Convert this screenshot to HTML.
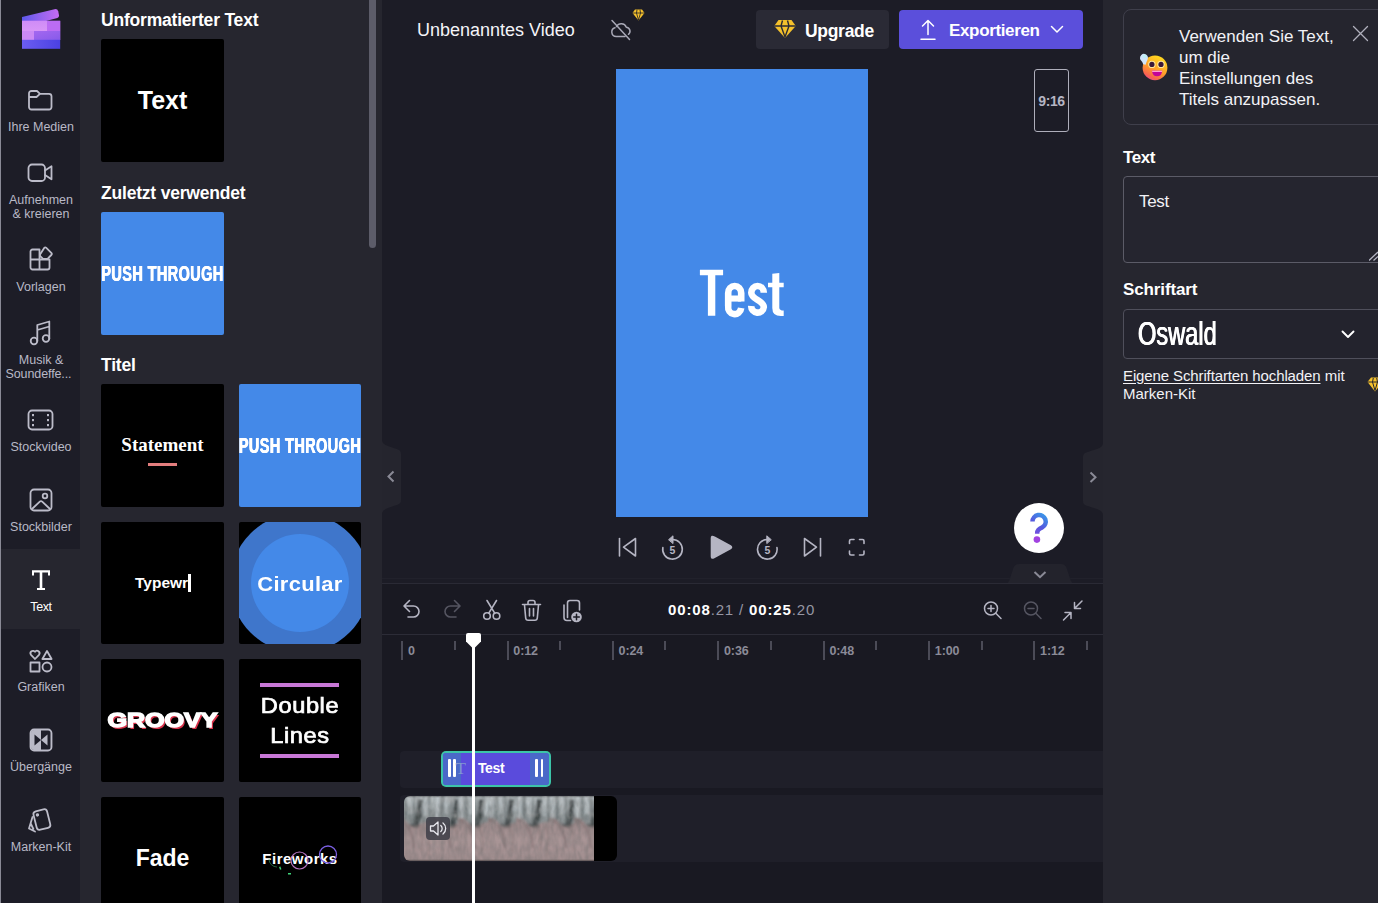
<!DOCTYPE html>
<html><head><meta charset="utf-8">
<style>
*{box-sizing:border-box;margin:0;padding:0}
html,body{width:1378px;height:903px;overflow:hidden;background:#1c1c26;font-family:"Liberation Sans",sans-serif;color:#fff}
.abs{position:absolute}
#side{position:absolute;left:0;top:0;width:80px;height:903px;background:#1d1d27}
#side .edge{position:absolute;left:0;top:0;width:1px;height:903px;background:#8a8a96}
.nav{position:absolute;left:0;width:80px;text-align:center;color:#b9b9c6;font-size:12.5px;line-height:14px}
.nav svg{position:absolute;left:26px;width:28px;height:28px;fill:none;stroke:#bcbcc9;stroke-width:1.8;stroke-linecap:round;stroke-linejoin:round}
.nav .lb{position:absolute;left:1px;margin-top:1px;width:80px;text-align:center;white-space:nowrap}
#panel{position:absolute;left:80px;top:0;width:302px;height:903px;background:#26262f}
.h{position:absolute;left:101px;font-weight:bold;font-size:17.5px;color:#fff;white-space:nowrap;letter-spacing:-0.2px}
.th{position:absolute;width:123px;height:123px;background:#000;overflow:hidden}
.th.bl{background:#4489e8}
.ctr{position:absolute;left:0;width:100%;text-align:center;color:#fff;white-space:nowrap}
#center{position:absolute;left:382px;top:0;width:721px;height:583px;background:#1c1c26}
#tl{position:absolute;left:382px;top:583px;width:721px;height:320px;background:#191922;border-top:1px solid #2a2a35}
#right{position:absolute;left:1103px;top:0;width:275px;height:903px;background:#26262f}
.push{text-shadow:.5px 0 #fff,-.5px 0 #fff;font-weight:bold;font-size:22px;line-height:26px;letter-spacing:.7px;transform:scaleX(.655);left:-60px;width:calc(100% + 120px)}
.th{border-radius:2px}
.rl{font-size:12.5px;line-height:16px;color:#8b8b98;font-weight:bold;white-space:nowrap;letter-spacing:-.1px}
</style></head><body>
<div id="side"><div class="edge"></div>
<svg class="abs" style="left:20px;top:7px" width="44" height="46" viewBox="0 0 44 46">
<defs><linearGradient id="lg1" x1="0" y1="0" x2="1" y2="0"><stop offset="0" stop-color="#5c58ea"/><stop offset=".45" stop-color="#8f62ee"/><stop offset="1" stop-color="#c56cf3"/></linearGradient>
<linearGradient id="lg3" x1="0" y1="0" x2="1" y2="0"><stop offset="0" stop-color="#6b5df0"/><stop offset=".5" stop-color="#5b4fe9"/><stop offset="1" stop-color="#4b41e2"/></linearGradient>
<linearGradient id="lg4" x1="0" y1="0" x2="1" y2="1"><stop offset="0" stop-color="#a468f0"/><stop offset="1" stop-color="#875aea"/></linearGradient>
<linearGradient id="lg5" x1="0" y1="0" x2="0" y2="1"><stop offset="0" stop-color="#cf8cf6"/><stop offset="1" stop-color="#d896f7"/></linearGradient></defs>
<path d="M2 10 L34.500 2.200 Q37.500 1.600 38.300 4.500 L39 8.500 Q39.200 10.300 37.300 11 L26 14 L2 14 Z" fill="url(#lg1)"/>
<rect x="2" y="13.800" width="38.200" height="19.200" fill="#b66af1"/>
<rect x="2" y="13.800" width="25" height="10.200" fill="url(#lg5)"/>
<rect x="27" y="13.800" width="13.200" height="10.200" fill="#bb6cf3"/>
<rect x="2" y="24" width="12" height="9" fill="#cc8af5"/>
<rect x="14" y="24" width="26.200" height="9" fill="url(#lg4)"/>
<rect x="2" y="32.800" width="38.200" height="9" fill="url(#lg3)"/>
</svg>

<div class="nav" style="top:86px"><svg viewBox="0 0 28 28" style="top:0"><path d="M3 7.5 a2.5 2.5 0 0 1 2.500 -2.500 h5.500 l3 2.800 h9 a2.500 2.500 0 0 1 2.500 2.500 v10.700 a2.500 2.500 0 0 1 -2.500 2.500 h-17.500 a2.500 2.500 0 0 1 -2.500 -2.500 z M3 11 h7.500 l3.500 -3.200"/></svg><div class="lb" style="top:33px">Ihre Medien</div></div>

<div class="nav" style="top:159px"><svg viewBox="0 0 28 28" style="top:0"><rect x="2.500" y="5.500" width="16.500" height="16.500" rx="3.500"/><path d="M19 11.500 l6.500 -4.200 v13 l-6.500 -4.200"/></svg><div class="lb" style="top:33px">Aufnehmen</div><div class="lb" style="top:47px">&amp; kreieren</div></div>

<div class="nav" style="top:245px"><svg viewBox="0 0 28 28" style="top:0"><path d="M4.500 6.500 a2 2 0 0 1 2 -2 h7 v10 h-9 z M4.500 14.500 h9 v10 h-7 a2 2 0 0 1 -2 -2 z M13.500 14.500 h10 v8 a2 2 0 0 1 -2 2 h-8 z"/><path d="M20.300 2.900 l5 5 a1.500 1.500 0 0 1 0 2.100 l-3.800 3.800 h-4.500 l-3 -3 v-1.200 l4.200 -6.700 a1.500 1.500 0 0 1 2.100 0 z" transform="translate(0 0)"/></svg><div class="lb" style="top:34px">Vorlagen</div></div>

<div class="nav" style="top:318px"><svg viewBox="0 0 28 28" style="top:0"><circle cx="8" cy="23" r="3.300"/><circle cx="20" cy="20.500" r="3.300"/><path d="M11.300 23 v-16 l12 -3.500 v17 M11.300 12 l12 -3.500"/></svg><div class="lb" style="top:34px">Musik &amp;</div><div class="lb" style="top:48px;left:-1.500px;letter-spacing:-.1px">Soundeffe...</div></div>

<div class="nav" style="top:406px"><svg viewBox="0 0 28 28" style="top:0"><rect x="2.500" y="4.500" width="24" height="19" rx="3.500"/><g stroke="none" fill="#b9b9c6"><rect x="6" y="8" width="2" height="2.200"/><rect x="6" y="13" width="2" height="2.200"/><rect x="6" y="18" width="2" height="2.200"/><rect x="21" y="8" width="2" height="2.200"/><rect x="21" y="13" width="2" height="2.200"/><rect x="21" y="18" width="2" height="2.200"/></g></svg><div class="lb" style="top:33px">Stockvideo</div></div>

<div class="nav" style="top:486px"><svg viewBox="0 0 28 28" style="top:0"><rect x="4.500" y="3.500" width="21" height="21" rx="3.500"/><circle cx="19" cy="10" r="2.300"/><path d="M6 23 l7.800 -7.300 a1.800 1.800 0 0 1 2.400 0 l7.800 7.300"/></svg><div class="lb" style="top:33px">Stockbilder</div></div>

<div class="abs" style="left:1px;top:549px;width:79px;height:80px;background:#26262f"></div>
<svg class="abs" style="left:31px;top:569px" width="20" height="22" viewBox="0 0 20 22"><path d="M1 1.200 H19 V6.500 H17 V3.500 H11.300 V19 H14 V21 H6 V19 H8.700 V3.500 H3 V6.500 H1 Z" fill="#fff"/></svg>
<div class="nav" style="top:599px;color:#fff"><div class="lb" style="top:0;letter-spacing:-.4px">Text</div></div>

<div class="nav" style="top:646px"><svg viewBox="0 0 28 28" style="top:0"><path d="M9 13 l-4 -4.200 a2.500 2.500 0 0 1 4 -3 a2.500 2.500 0 0 1 4 3 z"/><path d="M21 5 l4.600 8 h-9.200 z"/><rect x="4.500" y="16.500" width="9" height="9"/><circle cx="21" cy="21" r="4.500"/></svg><div class="lb" style="top:33px">Grafiken</div></div>

<div class="nav" style="top:726px"><svg viewBox="0 0 28 28" style="top:0"><rect x="4.500" y="3.500" width="21" height="21" rx="3.500"/><path d="M15 4 h7 a3 3 0 0 1 3 3 v14 a3 3 0 0 1 -3 3 h-7 z M8 8.500 l6.500 5.500 l-6.500 5.500 z" fill="#b9b9c6" stroke="none"/><path d="M15 4 h-7 a3 3 0 0 0 -3 3 v14 a3 3 0 0 0 3 3 h7 z" fill="#b9b9c6" stroke="none"/><path d="M8.500 8.500 l6.500 5.500 l-6.500 5.500 z" fill="#1e1e29" stroke="none"/><path d="M15 4.500 h7 a2.500 2.500 0 0 1 2.500 2.500 v14 a2.500 2.500 0 0 1 -2.500 2.500 h-7 z" fill="#1e1e29" stroke="none"/><path d="M21.500 8.500 l-6.500 5.500 l6.500 5.500 z" fill="#b9b9c6" stroke="none"/></svg><div class="lb" style="top:33px">Übergänge</div></div>

<div class="nav" style="top:806px"><svg viewBox="0 0 28 28" style="top:0"><g transform="rotate(-14 16 14)"><rect x="9" y="4" width="14" height="19" rx="3"/><circle cx="12.800" cy="8" r="0.800" fill="#b9b9c6"/></g><path d="M6.500 11 l-3.500 11.500 l6 3 M4.700 17.500 l2.700 5.500" /></svg><div class="lb" style="top:33px">Marken-Kit</div></div>
</div>
<div id="panel"></div>
<div class="abs" style="left:369px;top:-6px;width:7px;height:254px;background:#5c5c69;border-radius:4px"></div>
<div class="h" id="h1" style="top:10px">Unformatierter Text</div>
<div class="th" style="left:101px;top:39px"><div class="ctr" id="t_text" style="top:46px;font-weight:bold;font-size:25px;line-height:30px">Text</div></div>
<div class="h" id="h2" style="top:183px">Zuletzt verwendet</div>
<div class="th bl" style="left:101px;top:212px"><div class="ctr push" id="push1" style="top:49px">PUSH THROUGH</div></div>
<div class="h" id="h3" style="top:355px">Titel</div>
<div class="th" style="left:101px;top:384px"><div class="ctr" id="stmt" style="top:49px;font-family:'Liberation Serif',serif;font-weight:bold;font-size:19px;line-height:24px">Statement</div><div class="abs" style="left:47px;top:79px;width:29px;height:3px;background:#e27d7d"></div></div>
<div class="th bl" style="left:239px;top:384px;width:122px"><div class="ctr push" id="push2" style="top:49px">PUSH THROUGH</div></div>
<div class="th" style="left:101px;top:522px;height:122px"><div class="abs" id="typ" style="left:34px;top:51px;font-weight:bold;font-size:15.5px;line-height:20px;white-space:nowrap">Typewr</div><div class="abs" style="left:87px;top:52px;width:2.500px;height:18px;background:#fff"></div></div>
<div class="th" style="left:239px;top:522px;width:122px;height:122px"><div class="abs" style="left:-9px;top:-9px;width:140px;height:140px;border-radius:50%;background:#3f76cb"></div><div class="abs" style="left:12px;top:12px;width:98px;height:98px;border-radius:50%;background:#4489e8"></div><div class="ctr" id="circ" style="top:50px;font-weight:bold;font-size:20px;line-height:24px;letter-spacing:.3px;transform:scaleX(1.095)">Circular</div></div>
<div class="th" style="left:101px;top:659px"><div class="ctr" id="groovy" style="top:49px;font-weight:bold;font-size:21px;line-height:24px;transform:scaleX(1.195);text-shadow:1.500px 1.500px 0 #d8324a;-webkit-text-stroke:1.5px #fff">GROOVY</div></div>
<div class="th" style="left:239px;top:659px;width:122px"><div class="abs" style="left:21px;top:24px;width:79px;height:4px;background:#c878d6"></div><div class="abs" style="left:21px;top:95px;width:79px;height:4px;background:#c878d6"></div><div class="ctr" id="dbl1" style="top:35px;font-size:21.500px;line-height:24px;letter-spacing:.5px;transform:scaleX(1.1);-webkit-text-stroke:.7px #fff">Double</div><div class="ctr" id="dbl2" style="top:65px;font-size:21.500px;line-height:24px;letter-spacing:.5px;transform:scaleX(1.1);-webkit-text-stroke:.7px #fff">Lines</div></div>
<div class="th" style="left:101px;top:797px"><div class="ctr" id="fade" style="top:47px;font-weight:bold;font-size:23px;line-height:28px">Fade</div></div>
<div class="th" style="left:239px;top:797px;width:122px"><div class="ctr" id="fw" style="top:52px;font-weight:bold;font-size:15px;line-height:20px;letter-spacing:.5px">Fireworks</div><svg class="abs" style="left:0;top:0" width="122" height="106"><circle cx="60.500" cy="63.500" r="8.500" fill="none" stroke="#c77dd0" stroke-width="1.200" opacity=".9"/><circle cx="89" cy="57.500" r="8.500" fill="none" stroke="#7a5fe0" stroke-width="1.300"/><path d="M30 62 a8 8 0 0 0 8 8" fill="none" stroke="#2d8a55" stroke-width="1" opacity=".7"/><rect x="40" y="70" width="1.500" height="3" fill="#3fd47a" transform="rotate(-20 40 70)"/><rect x="49" y="76" width="3" height="1.500" fill="#3fd47a"/></svg></div>
<svg class="abs" style="left:382px;top:438px;z-index:5" width="20" height="78"><path d="M0 0 L0 78 L0 76 Q0 72 6 70 L16 66.500 Q19 65.500 19 62 L19 16 Q19 12.500 16 11.500 L6 8 Q0 6 0 2 Z" fill="#25252e"/><path d="M11.500 33.500 L6.500 38.500 L11.500 43.500" fill="none" stroke="#8a8a96" stroke-width="2"/></svg>
<div id="center">
<div class="abs" style="left:0;top:578px;width:721px;height:1px;background:#21212b"></div>
<div class="abs" id="title" style="left:35px;top:19px;font-size:18px;line-height:22px;white-space:nowrap;color:#f4f4f8">Unbenanntes Video</div>
<svg class="abs" style="left:226px;top:17px" width="26" height="26" viewBox="0 0 26 26" fill="none" stroke="#a8a8b6" stroke-width="1.500" stroke-linecap="round" stroke-linejoin="round"><path d="M8.500 9.500 A5.500 5.500 0 0 1 18.300 10.200 A4 4 0 0 1 20.500 17.300 M17 19.500 H8.200 A4.500 4.500 0 0 1 7 10.700"/><path d="M4 3.500 L21.500 22.500"/></svg>
<svg class="abs" style="left:250px;top:9px" width="13" height="12" viewBox="0 0 13 12"><path d="M3 0.500 H10 L12.500 4 L6.500 11.500 L0.500 4 Z" fill="#f5c12c"/><path d="M0.500 4 H12.500 M4.500 4 L6.500 11 L8.500 4 M4.500 4 L5 0.800 M8.500 4 L8 0.800" stroke="#1c1c26" stroke-width=".8" fill="none"/></svg>
<div class="abs" style="left:374px;top:10px;width:133px;height:39px;background:#2a2a35;border-radius:4px"></div>
<svg class="abs" style="left:391px;top:19px" width="24" height="20" viewBox="0 0 24 20"><path d="M5.500 1 H18.500 L22.800 7 L12 19 L1.200 7 Z" fill="#f5c12c"/><path d="M1.200 7 H22.800 M8 7 L12 18 L16 7 M8 7 L9.500 1.500 M16 7 L14.500 1.500" stroke="#2a2a35" stroke-width="1.400" fill="none"/></svg>
<div class="abs" id="upg" style="left:423px;top:19.600px;font-weight:bold;font-size:17.5px;line-height:22px;white-space:nowrap;letter-spacing:-.3px">Upgrade</div>
<div class="abs" style="left:517px;top:10px;width:184px;height:39px;background:#5b4fdb;border-radius:4px"></div>
<svg class="abs" style="left:537px;top:19px" width="18" height="22" viewBox="0 0 18 22" fill="none" stroke="#fff" stroke-width="1.500" stroke-linecap="round" stroke-linejoin="round"><path d="M9 15.500 V2 M3.500 7 L9 1.500 L14.500 7 M2 20.200 H16"/></svg>
<div class="abs" id="exp" style="left:567px;top:19.600px;font-weight:bold;font-size:17px;line-height:22px;white-space:nowrap;letter-spacing:-.35px">Exportieren</div>
<svg class="abs" style="left:668px;top:25px" width="14" height="9" viewBox="0 0 14 9" fill="none" stroke="#fff" stroke-width="1.500" stroke-linecap="round" stroke-linejoin="round"><path d="M1.500 1.500 L7 7 L12.500 1.500"/></svg>

<div class="abs" style="left:234px;top:69px;width:252px;height:448px;background:#4489e8"></div>
<svg class="abs" id="bigtest" style="left:310px;top:262px" width="100" height="62" viewBox="692 262 100 62"><g fill="#fff" stroke="none">
<path d="M699.900 269.700 H723.100 V275.300 H715.300 V315.800 H707.900 V275.300 H699.900 Z"/>
<path d="M768 282.700 H772.300 V273.800 L779.300 273.100 V282.700 H783.700 V287.300 H779.300 V307.800 Q779.300 310.600 783.700 310.600 V315.900 Q772.300 317.400 772.300 308 V287.300 H768 Z"/>
</g>
<g fill="none" stroke="#fff">
<path d="M741.200 301.600 V293 A6.500 7 0 0 0 728.200 293 V306 A6.500 7.100 0 0 0 741.200 308" stroke-width="6.600"/>
<path d="M728.200 298.550 H741.200" stroke-width="6.100"/>
<path d="M763.800 292.700 A6.250 6.700 0 0 0 751.300 292.700 C751.300 299.500 763.800 300.500 763.800 307 A6.250 6.100 0 0 1 751.300 306" stroke-width="6.600"/>
</g></svg>

<div class="abs" style="left:652px;top:69px;width:35px;height:63px;border:1.500px solid #aeaebb;border-radius:3px"></div>
<div class="abs" id="r916" style="left:652px;top:92px;width:35px;text-align:center;font-weight:bold;font-size:14px;line-height:18px;color:#b5b5c3;letter-spacing:-.4px">9:16</div>

<svg class="abs" style="left:232px;top:532px" width="260" height="32" viewBox="0 0 260 32" fill="none" stroke="#b5b5c3" stroke-width="1.600" stroke-linecap="round" stroke-linejoin="round">
<path d="M5.500 6.500 V24"/><path d="M21.500 6.500 V24 L9.500 15.200 Z"/>
<path d="M58.500 7.500 A9.800 9.800 0 1 1 48.850 15.600"/><path d="M54.800 7.500 L59 3.800 V11.200 Z" fill="#b5b5c3" stroke-width="1"/>
<path d="M97.500 6 Q97.500 3.500 100 5 L116.500 14 Q118.500 15.200 116.500 16.500 L100 25.500 Q97.500 27 97.500 24.500 Z" fill="#b5b5c3"/>
<path d="M153.300 7.500 A9.800 9.800 0 1 0 162.950 15.600"/><path d="M157 7.500 L152.800 3.800 V11.200 Z" fill="#b5b5c3" stroke-width="1"/>
<path d="M190.500 6.500 V24 L202.500 15.200 Z"/><path d="M206.500 6.500 V24"/>
<path d="M235.500 11.500 V9 a1.500 1.500 0 0 1 1.500 -1.500 h3 M245.500 7.500 h3 a1.500 1.500 0 0 1 1.500 1.500 v2.500 M250 19 v2.500 a1.500 1.500 0 0 1 -1.500 1.500 h-3 M240 23 h-3 a1.500 1.500 0 0 1 -1.500 -1.500 V19"/>
</svg>
<div class="abs" style="left:285.500px;top:544px;width:10px;text-align:center;font-weight:bold;font-size:10.500px;line-height:12px;color:#b5b5c3">5</div>
<div class="abs" style="left:380.300px;top:544px;width:10px;text-align:center;font-weight:bold;font-size:10.500px;line-height:12px;color:#b5b5c3">5</div>

<svg class="abs" style="left:700px;top:441px" width="22" height="76"><path d="M21 0 L21 76 L21 74 Q21 70 15 68 L4 64.500 Q1 63.500 1 60 L1 16 Q1 12.500 4 11.500 L15 8 Q21 6 21 2 Z" fill="#25252e"/><path d="M8.500 31.500 L13.500 36.300 L8.500 41" fill="none" stroke="#8a8a96" stroke-width="2"/></svg>

<div class="abs" style="left:632px;top:503px;width:50px;height:50px;border-radius:50%;background:#fff"></div>
<svg class="abs" style="left:632px;top:503px" width="50" height="50" viewBox="0 0 50 50"><defs><linearGradient id="qg" gradientUnits="userSpaceOnUse" x1="34" y1="14" x2="18" y2="36"><stop offset="0" stop-color="#3a97e8"/><stop offset=".45" stop-color="#5558de"/><stop offset="1" stop-color="#8a48de"/></linearGradient></defs><path d="M18.500 18.600 A6.600 6.600 0 1 1 28.300 24.300 Q23.200 26.300 23.200 30 V30.800" fill="none" stroke="url(#qg)" stroke-width="4.500" stroke-linecap="butt"/><circle cx="22.900" cy="36.600" r="3.300" fill="#a142e0"/></svg>
<svg class="abs" style="left:622px;top:563px" width="72" height="21" viewBox="0 0 72 21"><path d="M0 21 Q4 21 5.500 17 L9 6 Q10.500 1 15 1 H57 Q61.500 1 63 6 L66.500 17 Q68 21 72 21 Z" fill="#23232c"/><path d="M30.500 9 L36 14.200 L41.500 9" fill="none" stroke="#8a8a96" stroke-width="2"/></svg>
</div>
<div id="tl">
<svg class="abs" style="left:18px;top:13px" width="190" height="28" viewBox="0 0 190 28" fill="none" stroke="#b5b5c3" stroke-width="1.600" stroke-linecap="round" stroke-linejoin="round">
<path d="M9.500 3.500 L4 9 L9.500 14.500 M4.500 9 H13.500 A5.500 5.500 0 0 1 13.500 20 H8"/>
<g stroke="#555561"><path d="M54.500 3.500 L60 9 L54.500 14.500 M59.500 9 H50.500 A5.500 5.500 0 0 0 50.500 20 H56"/></g>
<circle cx="87" cy="19" r="3.300"/><circle cx="96.500" cy="19" r="3.300"/><path d="M88.800 16.200 L96.500 3.500 M94.700 16.200 L87 3.500"/>
<path d="M122.500 7.500 H140.500 M128 7 V5.500 A2 2 0 0 1 130 3.500 H133 A2 2 0 0 1 135 5.500 V7 M124.500 8 L125.700 21 A2.500 2.500 0 0 0 128.200 23.300 H134.800 A2.500 2.500 0 0 0 137.300 21 L138.500 8 M129.500 11.500 V19 M133.500 11.500 V19"/>
<path d="M167.500 20.500 V6 A2.500 2.500 0 0 1 170 3.500 H177 A2.500 2.500 0 0 1 179.500 6 V13 M170.500 23.500 H167 A3 3 0 0 1 164 20.500 V8"/>
<circle cx="176.500" cy="20" r="5.300" fill="#b5b5c3" stroke="none"/><path d="M176.500 17.200 V22.800 M173.700 20 H179.300" stroke="#191922" stroke-width="1.500"/>
</svg>
<div class="abs" id="time" style="left:286px;top:16px;font-size:15px;line-height:20px;white-space:nowrap;letter-spacing:.85px;color:#9696a3"><b style="color:#fff">00:08</b>.21 / <b style="color:#fff">00:25</b>.20</div>
<svg class="abs" style="left:598px;top:13px" width="108" height="28" viewBox="0 0 108 28" fill="none" stroke="#b5b5c3" stroke-width="1.500" stroke-linecap="round" stroke-linejoin="round">
<circle cx="11" cy="11.500" r="6.500"/><path d="M15.800 16.300 L21 21.500 M11 8.500 V14.500 M8 11.500 H14"/>
<g stroke="#555561"><circle cx="51" cy="11.500" r="6.500"/><path d="M55.800 16.300 L61 21.500 M48 11.500 H54"/></g>
<path d="M102 4 L94.500 11.500 M94.500 5.500 V11.500 H100.500 M83.500 23 L91 15.500 M85 15.500 H91 V21.500"/>
</svg>
<div class="abs" style="left:0;top:50px;width:721px;height:1px;background:#2c2c37"></div>
<div class="abs" style="left:19.2px;top:57px;width:2px;height:19px;background:#4b4b57"></div><div class="abs rl" style="left:25.9px;top:59px">0</div><div class="abs" style="left:71.7px;top:57px;width:2px;height:9px;background:#4b4b57"></div><div class="abs" style="left:124.6px;top:57px;width:2px;height:19px;background:#4b4b57"></div><div class="abs rl" style="left:131.3px;top:59px">0:12</div><div class="abs" style="left:177.1px;top:57px;width:2px;height:9px;background:#4b4b57"></div><div class="abs" style="left:229.9px;top:57px;width:2px;height:19px;background:#4b4b57"></div><div class="abs rl" style="left:236.6px;top:59px">0:24</div><div class="abs" style="left:282.4px;top:57px;width:2px;height:9px;background:#4b4b57"></div><div class="abs" style="left:335.3px;top:57px;width:2px;height:19px;background:#4b4b57"></div><div class="abs rl" style="left:342.0px;top:59px">0:36</div><div class="abs" style="left:387.8px;top:57px;width:2px;height:9px;background:#4b4b57"></div><div class="abs" style="left:440.7px;top:57px;width:2px;height:19px;background:#4b4b57"></div><div class="abs rl" style="left:447.4px;top:59px">0:48</div><div class="abs" style="left:493.2px;top:57px;width:2px;height:9px;background:#4b4b57"></div><div class="abs" style="left:546.1px;top:57px;width:2px;height:19px;background:#4b4b57"></div><div class="abs rl" style="left:552.8px;top:59px">1:00</div><div class="abs" style="left:598.6px;top:57px;width:2px;height:9px;background:#4b4b57"></div><div class="abs" style="left:651.4px;top:57px;width:2px;height:19px;background:#4b4b57"></div><div class="abs rl" style="left:658.1px;top:59px">1:12</div><div class="abs" style="left:703.9px;top:57px;width:2px;height:9px;background:#4b4b57"></div>
<div class="abs" style="left:18px;top:167px;width:703px;height:37px;background:#1f1f29;border-radius:4px 0 0 4px"></div>
<div class="abs" style="left:18px;top:211px;width:703px;height:67px;background:#1f1f29;border-radius:4px 0 0 4px"></div>

<div class="abs" style="left:59px;top:167px;width:110px;height:35.500px;border-radius:5px;background:#3cc4a8"></div>
<div class="abs" style="left:60.700px;top:168.700px;width:106.600px;height:32.100px;border-radius:3px;background:#5a4bdc;overflow:hidden"><div class="abs" style="left:0;top:0;width:18px;height:32px;background:#4a68c8"></div><div class="abs" style="right:0;top:0;width:19px;height:32px;background:#4a68c8"></div></div>
<div class="abs" style="left:66px;top:175px;width:2.800px;height:17.500px;background:#fff;border-radius:1px"></div><div class="abs" style="left:71px;top:175px;width:2.800px;height:17.500px;background:#fff;border-radius:1px"></div>
<div class="abs" style="left:153px;top:175px;width:2.800px;height:17.500px;background:#fff;border-radius:1px"></div><div class="abs" style="left:158.500px;top:175px;width:2.800px;height:17.500px;background:#fff;border-radius:1px"></div>
<div class="abs" style="left:73.500px;top:173.500px;font-family:'Liberation Serif',serif;font-size:17px;line-height:22px;color:#8196cf">T</div>
<div class="abs" id="cliptxt" style="left:96px;top:175px;font-weight:bold;font-size:14px;line-height:18px;letter-spacing:-.4px">Test</div>

<div class="abs" id="vclip" style="left:22px;top:212px;width:213px;height:65px;border-radius:6px;background:#000;overflow:hidden"><svg class="abs" style="left:0;top:0" width="190" height="65" viewBox="0 0 190 65"><defs>
<linearGradient id="sky" x1="0" y1="0" x2="0" y2="1"><stop offset="0" stop-color="#b4bcc0"/><stop offset=".2" stop-color="#969ea1"/><stop offset=".45" stop-color="#7f8688"/><stop offset="1" stop-color="#7f8688"/></linearGradient>
<linearGradient id="gnd" x1="0" y1="0" x2="0" y2="1"><stop offset="0" stop-color="#978586"/><stop offset=".5" stop-color="#a99596"/><stop offset="1" stop-color="#a18e8f"/></linearGradient>
<filter id="bl" x="-5%" y="-5%" width="110%" height="110%"><feGaussianBlur stdDeviation="1.1"/></filter>
<filter id="nz" x="0" y="0" width="100%" height="100%"><feTurbulence type="fractalNoise" baseFrequency=".18 .12" numOctaves="2" seed="7"/><feColorMatrix values="0 0 0 0 .5  0 0 0 0 .5  0 0 0 0 .5  .9 .9 .9 0 -1.05"/></filter>
<filter id="nz2" x="0" y="0" width="100%" height="100%"><feTurbulence type="fractalNoise" baseFrequency=".22 .1" numOctaves="2" seed="3"/><feColorMatrix values="0 0 0 0 .12  0 0 0 0 .13  0 0 0 0 .13  .9 .9 .9 0 -1.0"/></filter>
<g id="fr">
<rect x="0" y="0" width="37" height="65" fill="url(#sky)"/>
<rect x="2" y="0" width="3" height="24" fill="#dfe7ea" opacity=".45"/><rect x="7" y="0" width="2.500" height="24" fill="#4f5759" opacity=".5"/><rect x="11" y="0" width="4" height="18" fill="#cfd7db" opacity=".5"/><rect x="16" y="0" width="2" height="26" fill="#5a6264" opacity=".5"/><rect x="27" y="0" width="3" height="20" fill="#d8e0e4" opacity=".5"/><rect x="31.500" y="0" width="2" height="26" fill="#4c5456" opacity=".5"/><rect x="34" y="0" width="3" height="14" fill="#e2eaee" opacity=".4"/>
<path d="M21 3 L26 4 L24 14 L25 20 L21 30 L16 29 L19 18 Z" fill="#2f3637" opacity=".8"/>
<path d="M0 22 Q6 21 11 27 Q15 33 21 29 Q28 24 37 27 V65 H0 Z" fill="url(#gnd)"/>
<path d="M0 24 Q7 24 12 32 Q16 40 17 52" fill="none" stroke="#857374" stroke-width="2.500" opacity=".6"/>
<path d="M21 31 Q27 40 24 55 M30 30 Q33 42 31 60" fill="none" stroke="#8f7b79" stroke-width="1.500" opacity=".5"/>
<path d="M13 28 Q18 33 23 29" fill="none" stroke="#4f4b4b" stroke-width="2.500" opacity=".55"/>
</g></defs>
<g filter="url(#bl)">
<use href="#fr" x="-7"/><use href="#fr" x="29.500"/><use href="#fr" x="54"/><use href="#fr" x="84"/><use href="#fr" x="112"/><use href="#fr" x="145"/><use href="#fr" x="170"/>
</g>
<mask id="mk"><linearGradient id="mkg" x1="0" y1="0" x2="0" y2="1"><stop offset="0" stop-color="#fff"/><stop offset=".32" stop-color="#fff"/><stop offset=".5" stop-color="#000"/></linearGradient><rect x="0" y="0" width="190" height="65" fill="url(#mkg)"/></mask><g mask="url(#mk)"><rect x="0" y="0" width="190" height="65" filter="url(#nz)" opacity=".55"/></g>
<rect x="0" y="0" width="190" height="65" filter="url(#nz2)" opacity=".35"/>
</svg></div>
<div class="abs" style="left:44px;top:233px;width:24px;height:23px;border-radius:4px;background:rgba(62,62,72,.85)"></div>
<svg class="abs" style="left:46px;top:235px" width="20" height="19" viewBox="0 0 20 19" fill="none" stroke="#e8e8ee" stroke-width="1.300" stroke-linecap="round" stroke-linejoin="round"><path d="M2.500 7 H5.500 L10 3 V16 L5.500 12 H2.500 Z"/><path d="M12.800 6.500 A4 4 0 0 1 12.800 12.500 M15 4 A7 7 0 0 1 15 15"/></svg>

<div class="abs" style="left:90px;top:49px;width:3px;height:271px;background:#fff"></div>
<svg class="abs" style="left:83px;top:48px" width="17" height="18" viewBox="0 0 17 18"><path d="M1 3 A2 2 0 0 1 3 1 H14 A2 2 0 0 1 16 3 V9.500 L8.500 17 L1 9.500 Z" fill="#fff"/></svg>
</div>
<div id="right">
<div class="abs" style="left:20px;top:9px;width:270px;height:116px;border:1px solid #3f3f4b;border-radius:8px;background:#25252e"></div>
<svg class="abs" style="left:34px;top:50px" width="34" height="34" viewBox="0 0 34 34"><defs><linearGradient id="fg" x1=".75" y1=".1" x2=".3" y2="1"><stop offset="0" stop-color="#ffd61f"/><stop offset=".5" stop-color="#ffa02a"/><stop offset=".85" stop-color="#f8644f"/><stop offset="1" stop-color="#ee4a8c"/></linearGradient></defs>
<circle cx="18" cy="17.800" r="12.400" fill="url(#fg)"/>
<circle cx="14.900" cy="14.400" r="3.700" fill="#ffe79a"/><circle cx="24" cy="14.400" r="3.700" fill="#ffe79a"/><circle cx="14.900" cy="14.400" r="2.600" fill="#3b1838"/><circle cx="24" cy="14.400" r="2.600" fill="#3b1838"/>
<path d="M15 20.700 H25.200 Q24.800 26.200 20.100 26.200 Q15.400 26.200 15 20.700 Z" fill="#c2049a"/><path d="M15 20.700 H25.200 L25 22 H15.200 Z" fill="#ff9ed2"/>
<path transform="translate(0 .8)" d="M3 7.400 A4 4 0 1 1 10.600 8.800 Q9.500 11 8.600 14 L6.200 13.500 Q5.500 11 3.800 9.500 Q3 8.500 3 7.400Z" fill="#cfe4fb"/><circle cx="7.600" cy="6.300" r="2" fill="#b8f0f4" opacity=".8"/>
</svg>
<div class="abs" id="tip" style="left:76px;top:26px;font-size:17px;line-height:21px;color:#f2f2f6;white-space:nowrap">Verwenden Sie Text,<br>um die<br>Einstellungen des<br>Titels anzupassen.</div>
<svg class="abs" style="left:249px;top:25px" width="17" height="17" viewBox="0 0 17 17" fill="none" stroke="#b0b0bc" stroke-width="1.300" stroke-linecap="round"><path d="M1.500 1.500 L15.500 15.500 M15.500 1.500 L1.500 15.500"/></svg>

<div class="abs" id="lbl1" style="left:20px;top:147px;font-weight:bold;font-size:17px;line-height:22px;letter-spacing:-.4px">Text</div>
<div class="abs" style="left:20px;top:176px;width:270px;height:87px;border:1px solid #5b5b67;border-radius:4px;background:#25252f"></div>
<div class="abs" id="ta" style="left:36px;top:191px;font-size:17px;line-height:22px;color:#f2f2f6;letter-spacing:-.3px">Test</div>
<svg class="abs" style="left:266px;top:251px" width="9" height="10" viewBox="0 0 9 10" stroke="#b5b5c3" stroke-width="1.300"><path d="M0 9.500 L9 1 M4.500 9.500 L9 5.500"/></svg>

<div class="abs" id="lbl2" style="left:20px;top:279px;font-weight:bold;font-size:17px;line-height:22px;letter-spacing:-.12px">Schriftart</div>
<div class="abs" style="left:20px;top:309px;width:270px;height:50px;border:1px solid #4f4f5b;border-radius:4px;background:#23232d"></div>
<div class="abs" id="osw" style="left:35px;top:314px;font-size:33px;line-height:40px;transform-origin:0 50%;transform:scaleX(.715);white-space:nowrap;text-shadow:.6px 0 #fff,-.6px 0 #fff">Oswald</div>
<svg class="abs" style="left:237.500px;top:329.500px" width="14" height="10" viewBox="0 0 14 10" fill="none" stroke="#fff" stroke-width="1.900" stroke-linecap="round" stroke-linejoin="round"><path d="M1.500 1.500 L7 7 L12.500 1.500"/></svg>
<div class="abs" id="lnk" style="left:20px;top:367px;font-size:15px;line-height:18px;color:#f2f2f6;white-space:nowrap"><span style="text-decoration:underline;text-underline-offset:2px;letter-spacing:-.12px">Eigene Schriftarten hochladen</span> mit<br>Marken-Kit</div>
<svg class="abs" style="left:264px;top:377px" width="16" height="15" viewBox="0 0 16 15"><path d="M4 0.500 H12 L15.500 5 L8 14.500 L0.500 5 Z" fill="#f5c12c"/><path d="M0.500 5 H15.500 M5.500 5 L8 13.500 L10.500 5 M5.500 5 L6.300 1 M10.500 5 L9.700 1" stroke="#25252f" stroke-width="1" fill="none"/></svg>
</div>
</body></html>
